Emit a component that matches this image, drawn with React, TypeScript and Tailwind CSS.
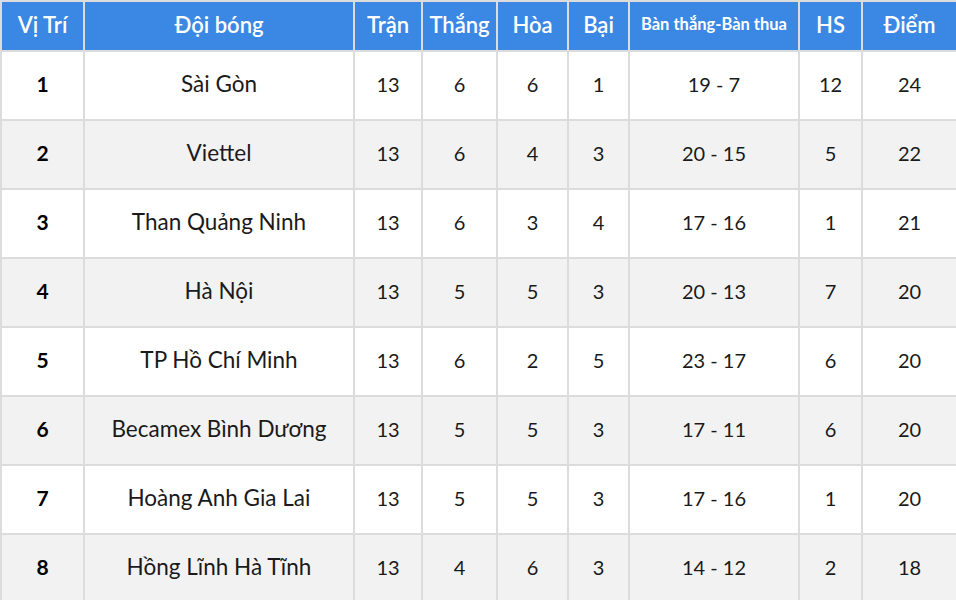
import React from "react";

const COLS = [
  { label: "Vị Trí", w: "w-[83px]" },
  { label: "Đội bóng", w: "w-[270px]" },
  { label: "Trận", w: "w-[68px]" },
  { label: "Thắng", w: "w-[75px]" },
  { label: "Hòa", w: "w-[71px]" },
  { label: "Bại", w: "w-[61px]" },
  { label: "Bàn thắng-Bàn thua", w: "w-[170px]", small: true },
  { label: "HS", w: "w-[63px]" },
  { label: "Điểm", w: "w-[95px]" },
];

const ROWS = [
  [1, "Sài Gòn", 13, 6, 6, 1, "19 - 7", 12, 24],
  [2, "Viettel", 13, 6, 4, 3, "20 - 15", 5, 22],
  [3, "Than Quảng Ninh", 13, 6, 3, 4, "17 - 16", 1, 21],
  [4, "Hà Nội", 13, 5, 5, 3, "20 - 13", 7, 20],
  [5, "TP Hồ Chí Minh", 13, 6, 2, 5, "23 - 17", 6, 20],
  [6, "Becamex Bình Dương", 13, 5, 5, 3, "17 - 11", 6, 20],
  [7, "Hoàng Anh Gia Lai", 13, 5, 5, 3, "17 - 16", 1, 20],
  [8, "Hồng Lĩnh Hà Tĩnh", 13, 4, 6, 3, "14 - 12", 2, 18],
];

export default function App() {
  return (
    <div
      className="w-[956px] h-[600px] overflow-hidden bg-white"
      style={{ fontFamily: "Lato, 'Noto Sans', sans-serif" }}
    >
      <table className="w-[958px] table-fixed border-collapse text-center">
        <thead>
          <tr className="h-[50px] bg-[#3a88e3] text-white">
            {COLS.map((c) => (
              <th
                key={c.label}
                className={`${c.w} border-2 border-[#dcdcdc] pb-[3px] ${
                  c.small ? "text-[16.5px] font-bold" : "text-[22px] font-semibold"
                }`}
              >
                {c.label}
              </th>
            ))}
          </tr>
        </thead>
        <tbody>
          {ROWS.map((r, i) => (
            <tr
              key={i}
              className={`h-[69px] text-[20px] text-[#1a1a1a] ${
                i % 2 === 1 ? "bg-[#f2f2f2]" : "bg-white"
              }`}
            >
              {r.map((v, j) => (
                <td
                  key={j}
                  className={`border-2 border-[#dcdcdc] pb-[4px] ${
                    j === 0
                      ? "text-[21px] font-bold text-black"
                      : j === 1
                      ? "text-[22.5px]"
                      : ""
                  }`}
                >
                  {v}
                </td>
              ))}
            </tr>
          ))}
        </tbody>
      </table>
    </div>
  );
}
